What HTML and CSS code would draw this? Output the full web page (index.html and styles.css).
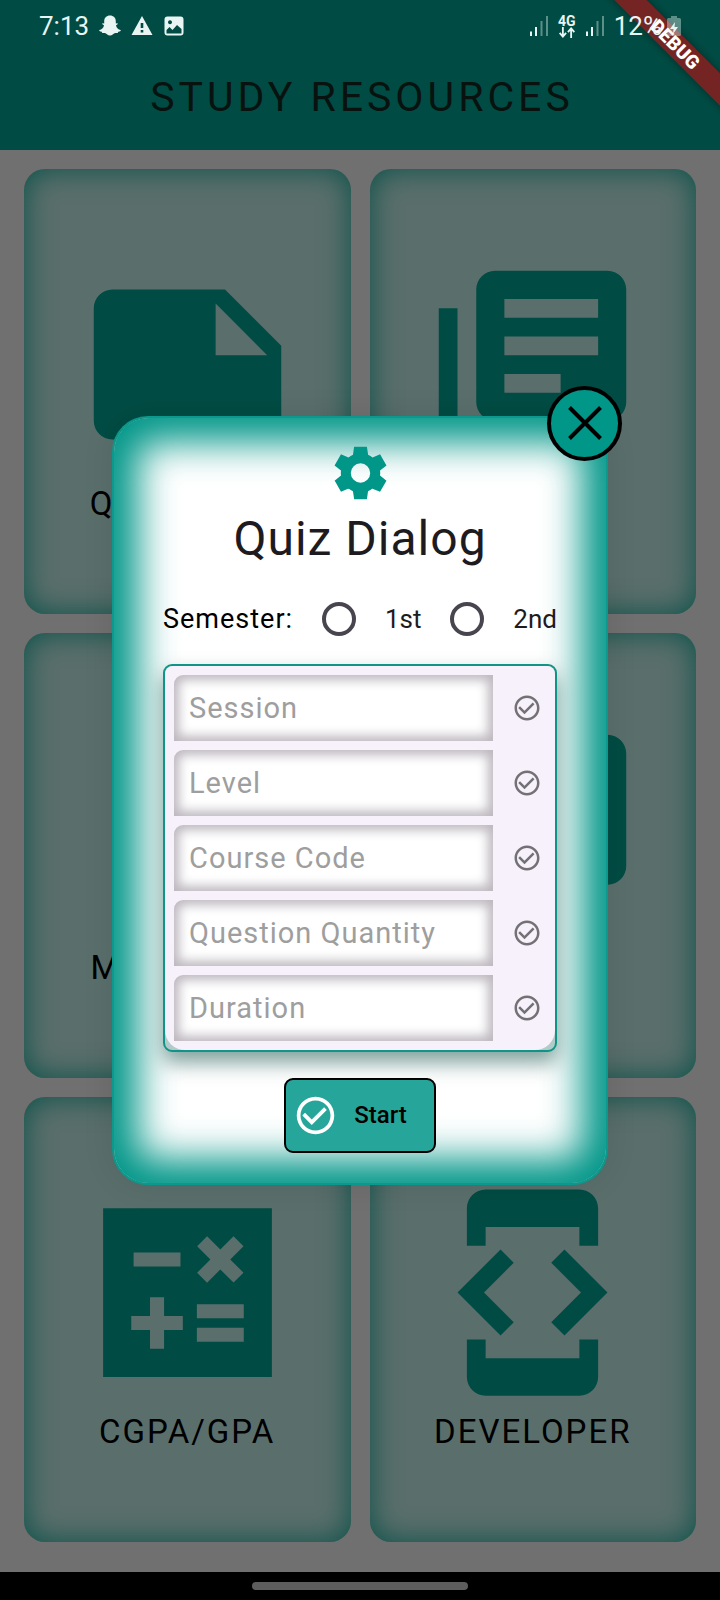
FILE: index.html
```html
<!DOCTYPE html>
<html lang="en">
<head>
<meta charset="utf-8">
<meta name="viewport" content="width=device-width, initial-scale=1">
<title>Study Resources</title>
<link rel="stylesheet" href="styles.css">
</head>
<body>
<svg class="defs" aria-hidden="true">
  <symbol id="check" viewBox="0 0 24 24"><path d="M16.59 7.58L10 14.17l-3.59-3.58L5 12l5 5 8-8zM12 2C6.48 2 2 6.48 2 12s4.48 10 10 10 10-4.48 10-10S17.52 2 12 2zm0 18c-4.42 0-8-3.58-8-8s3.58-8 8-8 8 3.58 8 8-3.58 8-8 8z"/></symbol>
  <symbol id="signal" viewBox="0 0 18 20"><path d="M0 15.500h2v4.500h-2zM5 11h2v9h-2z"/><path opacity=".4" d="M10.500 5h2v15h-2zM16 0h2v20h-2z"/></symbol>
</svg>
<div class="page">
  <header class="header">
    <div class="status">
      <div class="status-group">
        <span>7:13</span>
        <svg class="status-icon" viewBox="0 0 22 22"><path d="M11 .5c3.400 0 5.800 2.300 5.800 5.700v2.200c.8.300 1.600-.5 1.900.1.300.8-1.400 1.300-1.700 2 .6 2.500 2.300 4 4.600 4.600.5.300.1 1.200-2.300 1.700-.4.200-.2 1.200-.7 1.300-.8.100-1.800-.4-3 .1-1.200.6-2.300 2.200-4.600 2.200s-3.400-1.600-4.600-2.200c-1.200-.5-2.200 0-3-.1-.5-.1-.3-1.100-.7-1.300-2.400-.5-2.800-1.400-2.300-1.700 2.300-.6 4-2.100 4.600-4.600-.3-.7-2-1.200-1.700-2 .3-.6 1.100.2 1.900-.1V6.200C5.200 2.800 7.600.5 11 .5z"/></svg>
        <svg class="status-icon" viewBox="0 0 22 22"><path fill-rule="evenodd" d="M11 1l10.500 19H.5zM9.700 8v5h2.600V8zM9.700 15v2.500h2.600V15z"/></svg>
        <svg class="status-icon" viewBox="0 0 22 22"><path fill-rule="evenodd" d="M4.500 1.500h13a3 3 0 0 1 3 3v13a3 3 0 0 1-3 3h-13a3 3 0 0 1-3-3v-13a3 3 0 0 1 3-3zM3.500 15v3.500h15V14l-4.500-4-4.500 5-3-3zM7 5.300a2 2 0 1 0 .01 0z"/></svg>
      </div>
      <div class="status-group">
        <svg class="signal"><use href="#signal"/></svg>
        <span class="network"><span>4G</span><svg viewBox="0 0 18 12"><path fill="none" stroke="currentColor" stroke-width="2" d="M4.500 0v10M1 6.500l3.500 4 3.500-4M13.500 12V2M10 5.500l3.500-4 3.500 4"/></svg></span>
        <svg class="signal"><use href="#signal"/></svg>
        <span class="battery-level">12%</span>
        <svg class="battery" viewBox="0 0 14 20"><path opacity=".4" d="M4 0h6v2h2.500a1.500 1.500 0 0 1 1.500 1.500v15a1.500 1.500 0 0 1-1.500 1.500h-11A1.500 1.500 0 0 1 0 18.500v-15A1.500 1.500 0 0 1 1.500 2H4z"/><path d="M8 6L3 13h3.500L6 18l5-7H7.500z"/></svg>
      </div>
    </div>
    <h1 class="title">STUDY RESOURCES</h1>
    <div class="ribbon"><span class="ribbon-band">DEBUG</span></div>
  </header>

  <main class="grid">
    <a class="card" href="#questions"><svg class="card-icon" viewBox="0 0 24 24"><path d="M22 10l-6-6H4c-1.100 0-2 .9-2 2v12.010c0 1.100.9 1.990 2 1.990l16-.01c1.100 0 2-.89 2-1.990v-8zm-7-4.500l5.500 5.500H15V5.500z"/></svg><span>QUESTIONS</span></a>
    <a class="card" href="#notes"><svg class="card-icon" viewBox="0 0 24 24"><path d="M4 6H2v14c0 1.100.9 2 2 2h14v-2H4V6zm16-4H8c-1.100 0-2 .9-2 2v12c0 1.100.9 2 2 2h12c1.100 0 2-.9 2-2V4c0-1.100-.9-2-2-2zm-1 9H9V9h10v2zm-4 4H9v-2h6v2zm4-8H9V5h10v2z"/></svg><span>NOTES</span></a>
    <a class="card" href="#materials"><svg class="card-icon" viewBox="0 0 24 24"><path d="M18 2H6c-1.100 0-2 .9-2 2v16c0 1.100.9 2 2 2h12c1.100 0 2-.9 2-2V4c0-1.100-.9-2-2-2zM6 4h5v8l-2.500-1.500L6 12V4z"/></svg><span>MATERIALS</span></a>
    <a class="card" href="#videos"><svg class="card-icon" viewBox="0 0 24 24"><path d="M4 6H2v14c0 1.100.9 2 2 2h14v-2H4V6zm16-4H8c-1.100 0-2 .9-2 2v12c0 1.100.9 2 2 2h12c1.100 0 2-.9 2-2V4c0-1.100-.9-2-2-2zm-8 12.500v-9l6 4.500-6 4.500z"/></svg><span>VIDEOS</span></a>
    <a class="card" href="#gpa"><svg class="card-icon" viewBox="0 0 24 24"><path fill-rule="evenodd" d="M21 3H3v18h18V3zM13.030 7.060L14.090 6l1.410 1.410L16.910 6l1.060 1.060-1.410 1.410 1.410 1.410-1.060 1.060-1.410-1.400-1.410 1.410-1.060-1.060 1.410-1.410-1.410-1.420zM6.250 7.720h5v1.500h-5v-1.500zM11.500 16h-2v2H8v-2H6v-1.500h2v-2h1.500v2h2V16zM18 17.250h-5v-1.500h5v1.500zM18 14.750h-5v-1.500h5v1.500z"/></svg><span>CGPA/GPA</span></a>
    <a class="card" href="#developer"><svg class="card-icon" viewBox="0 0 24 24"><path d="M7 5h10v2h2V3c0-1.100-.9-1.990-2-1.990L7 1c-1.100 0-2 .9-2 2v4h2V5zm8.410 11.590L20 12l-4.590-4.590L14 8.830 17.170 12 14 15.170l1.410 1.420zM10 15.170L6.830 12 10 8.830 8.590 7.410 4 12l4.590 4.590L10 15.170zM17 19H7v-2H5v4c0 1.100.9 2 2 2h10c1.100 0 2-.9 2-2v-4h-2v2z"/></svg><span>DEVELOPER</span></a>
  </main>

  <footer class="nav"><div class="nav-handle"></div></footer>

  <div class="overlay">
    <form class="dialog" role="dialog" aria-labelledby="dialog-title">
      <button class="close" type="button" aria-label="Close"><svg viewBox="0 0 34 34"><path fill="none" stroke="currentColor" stroke-width="4" d="M1.500 1.500l31 31M32.500 1.500l-31 31"/></svg></button>
      <svg class="gear" viewBox="0 0 24 24"><path fill-rule="evenodd" d="M19.440 12.990l-.01.02c.04-.33.08-.67.08-1.010 0-.34-.03-.66-.07-.99l.01.02 2.440-1.920-2.430-4.220-2.870 1.160.01.01c-.52-.4-1.090-.74-1.710-1h.01L14.440 2H9.570l-.44 3.070h.01c-.62.26-1.190.6-1.710 1l.01-.01-2.880-1.170-2.440 4.220 2.440 1.920.01-.02c-.04.33-.07.65-.07.99 0 .34.03.68.08 1.010l-.01-.02-2.100 1.650-.33.26 2.430 4.200 2.880-1.150-.02-.04c.53.41 1.100.75 1.730 1.010h-.03L9.580 22h4.850s.03-.18.06-.42l.38-2.650h-.01c.62-.26 1.200-.6 1.730-1.010l-.02.04 2.880 1.150 2.430-4.200s-.14-.12-.33-.26l-2.110-1.660zM12 15.700a3.700 3.700 0 1 1 0-7.400 3.700 3.700 0 0 1 0 7.400z"/></svg>
      <h2 class="dialog-title" id="dialog-title">Quiz Dialog</h2>
      <div class="semester" role="radiogroup" aria-labelledby="semester-label">
        <span class="semester-label" id="semester-label">Semester:</span>
        <input class="radio" type="radio" name="semester" id="first"><label for="first">1st</label>
        <input class="radio" type="radio" name="semester" id="second"><label for="second">2nd</label>
      </div>
      <div class="panel">
        <div class="fields">
          <div class="field"><input class="text" type="text" aria-label="Session" placeholder="Session"><svg class="tick"><use href="#check"/></svg></div>
          <div class="field"><input class="text" type="text" aria-label="Level" placeholder="Level"><svg class="tick"><use href="#check"/></svg></div>
          <div class="field"><input class="text" type="text" aria-label="Course Code" placeholder="Course Code"><svg class="tick"><use href="#check"/></svg></div>
          <div class="field"><input class="text" type="text" aria-label="Question Quantity" placeholder="Question Quantity"><svg class="tick"><use href="#check"/></svg></div>
          <div class="field"><input class="text" type="text" aria-label="Duration" placeholder="Duration"><svg class="tick"><use href="#check"/></svg></div>
        </div>
      </div>
      <button class="start" type="button"><svg class="start-icon"><use href="#check"/></svg>Start</button>
    </form>
  </div>
</div>
</body>
</html>
```
FILE: styles.css
```css
* { box-sizing: border-box; }

body {
  margin: 0;
  font-family: Roboto, "Liberation Sans", sans-serif;
  background: #707070;
}

svg { display: block; fill: currentColor; }
.defs { position: absolute; width: 0; height: 0; }

.page {
  position: relative;
  display: flex;
  flex-direction: column;
  min-height: 100vh;
}

/* Header */
.header {
  position: relative;
  padding-bottom: 8px;
  background: #004c44;
}
.status {
  position: relative;
  z-index: 2;
  display: flex;
  justify-content: space-between;
  height: 52px;
  padding: 0 39px;
  color: #e8f5f3;
  font-size: 26px;
  line-height: 52px;
}
.status-group { display: flex; align-items: center; gap: 10px; }
.status-icon { width: 22px; height: 22px; }
.signal { width: 18px; height: 20px; }
.network {
  display: grid;
  justify-items: center;
  font-size: 14px;
  font-weight: 700;
  line-height: 12px;
}
.network svg { width: 18px; height: 11px; }
.battery { width: 14px; height: 20px; }
.battery-level { margin-right: -5px; }
.title {
  margin: 0;
  padding-left: 4px;
  color: #08120f;
  font-size: 41px;
  font-weight: 400;
  line-height: 90px;
  letter-spacing: 4px;
  text-align: center;
}
.ribbon {
  position: absolute;
  top: 0;
  right: 0;
  width: 120px;
  height: 120px;
  overflow: hidden;
}
.ribbon-band {
  position: absolute;
  top: 33px;
  left: -15px;
  width: 180px;
  color: #fff;
  background: #752424;
  box-shadow: 0 0 10px rgba(0, 0, 0, .4);
  font-size: 19px;
  font-weight: 900;
  line-height: 23px;
  text-align: center;
  transform: rotate(45deg);
}

/* Resource cards */
.grid {
  flex: 1;
  display: grid;
  grid-template-columns: 1fr 1fr;
  grid-auto-rows: 1fr;
  gap: 19px;
  padding: 19px 24px 30px;
}
.card {
  display: flex;
  flex-direction: column;
  align-items: center;
  justify-content: center;
  border-radius: 21px;
  background: #5a6f6c;
  box-shadow: inset 0 0 30px rgba(0, 76, 68, .9);
  color: #000;
  font-size: 33px;
  line-height: 54px;
  letter-spacing: 2px;
  text-decoration: none;
}
.card-icon { width: 225px; max-width: 100%; height: 225px; color: #004c44; }

.nav {
  display: grid;
  place-items: center;
  height: 28px;
  background: #000;
}
.nav-handle { width: 30%; height: 8px; border-radius: 4px; background: #5d5d5d; }

/* Dialog */
.overlay {
  position: absolute;
  inset: 0;
  display: grid;
  align-items: center;
  padding: 0 112px;
}
.dialog {
  position: relative;
  display: flex;
  flex-direction: column;
  align-items: center;
  padding: 22px 49px 30px;
  border: 2px solid #0a998c;
  border-radius: 36px;
  background: #fff;
  background-clip: padding-box;
  box-shadow: inset 0 0 38px 24px #009688, 0 0 30px rgba(0, 0, 0, .1);
}
.close {
  position: absolute;
  top: -32px;
  right: -16px;
  display: grid;
  place-items: center;
  width: 75px;
  height: 75px;
  padding: 0;
  border: 4px solid #000;
  border-radius: 50%;
  background: #009688;
  color: #000;
}
.close svg { width: 34px; height: 34px; }
.gear { width: 63px; height: 66px; color: #009688; }
.dialog-title {
  margin: 0;
  color: #1d1b20;
  font-size: 48px;
  font-weight: 400;
  line-height: 66px;
  letter-spacing: 1px;
}
.semester {
  align-self: stretch;
  display: flex;
  align-items: center;
  justify-content: space-between;
  height: 64px;
  margin: 15px 0 13px;
  color: #1d1b20;
  font-size: 26px;
}
.semester-label { color: #000; font-size: 27px; letter-spacing: 1px; }
.radio {
  appearance: none;
  width: 34px;
  height: 34px;
  margin: 0;
  border: 4px solid #49454f;
  border-radius: 50%;
}
.radio:checked { background: #009688; }
.panel {
  align-self: stretch;
  border: 2px solid #109488;
  border-radius: 9px;
  background: #b0cbc8;
  box-shadow: 0 11px 20px rgba(0, 70, 60, .5);
}
.fields {
  display: grid;
  gap: 9px;
  padding: 9px;
  border-radius: 8px 8px 20px 20px;
  background: #f6f1fa;
}
.field {
  display: grid;
  grid-template-columns: 1fr 38px;
  gap: 15px;
  align-items: center;
}
.text {
  width: 100%;
  height: 66px;
  padding: 0 15px;
  border: 0;
  border-radius: 9px 0 0 0;
  background: #fff;
  box-shadow: inset 0 0 11px 5px #bcb7be;
  color: #1d1b20;
  font: inherit;
  font-size: 29px;
  letter-spacing: 1px;
}
.text::placeholder { color: #9e9e9e; opacity: 1; }
.tick { justify-self: center; width: 30px; height: 30px; color: #737175; }
.start {
  display: flex;
  align-items: center;
  gap: 16px;
  height: 75px;
  margin-top: 26px;
  padding: 0 27px 0 7px;
  border: 2px solid #000;
  border-radius: 9px;
  background: #26a69a;
  color: #000;
  font: inherit;
  font-size: 24px;
  font-weight: 500;
}
.start-icon { width: 45px; height: 45px; color: #fff; }
```
